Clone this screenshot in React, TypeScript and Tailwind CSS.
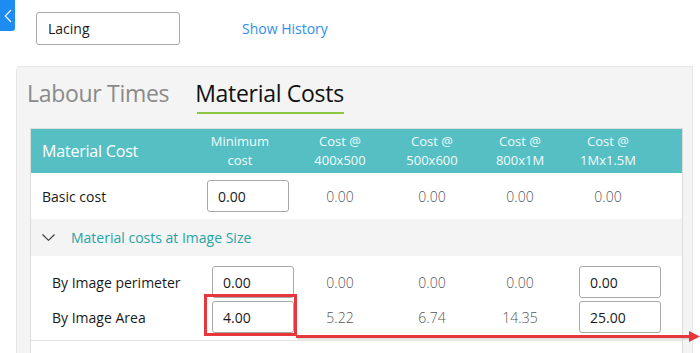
import React from 'react';

const cols = 'grid grid-cols-[157px_104px_96px_88px_88px_88px_31px]';

const ValueInput: React.FC<{ value: string; className?: string }> = ({ value, className = '' }) => (
  <div
    className={`w-[82px] h-[32px] flex items-center pl-[10px] bg-white border border-[#a8a8a8] rounded-[3px] text-[14px] text-[#1a1a1a] ${className}`}
  >
    {value}
  </div>
);

const Value: React.FC<{ v: string }> = ({ v }) => (
  <div className="flex items-center justify-center text-[14px] font-light text-[#555]">{v}</div>
);

const App: React.FC = () => {
  const headers = ['Minimum cost', 'Cost @ 400x500', 'Cost @ 500x600', 'Cost @ 800x1M', 'Cost @ 1Mx1.5M'];

  return (
    <div className="relative w-[700px] h-[353px] overflow-hidden bg-white font-['Open_Sans',sans-serif]">
      {/* top bar */}
      <div className="flex items-start">
        <div className="w-[15px] h-[31px] bg-[#1c8cf2] rounded-br-[3px] flex items-center justify-center">
          <svg width="8" height="14" viewBox="0 0 8 14" fill="none">
            <path d="M7 1 L1.2 7 L7 13" stroke="white" strokeWidth="1.1" />
          </svg>
        </div>
        <div className="ml-[21px] mt-[12px] w-[144px] h-[33px] flex items-center pl-[11px] border border-[#a8a8a8] rounded-[3px] text-[14px] text-[#1a1a1a]">
          Lacing
        </div>
        <div className="ml-[62px] mt-[17px] text-[14px] text-[#2d8ff0] leading-[24px]">Show History</div>
      </div>

      {/* panel */}
      <div className="ml-[16px] mt-[21px] w-[677px] h-[300px] bg-[#f4f4f4] border border-[#e6e6e6] rounded-tl-[4px]">
        <div className="flex pt-[10px] pl-[10px]">
          <div className="text-[23px] leading-[32px] text-[#8a8a8a] tracking-[-0.3px]">Labour Times</div>
          <div className="ml-[26px] flex flex-col">
            <div className="text-[23px] leading-[32px] text-[#111] tracking-[-0.3px]">Material Costs</div>
            <div className="mt-[3px] h-[2px] bg-[#8dc63f] ml-[2px]" />
          </div>
        </div>

        <div className="ml-[13px] mt-[14px] w-[653px] border border-[#dcdcdc] bg-white">
          {/* header */}
          <div className={`${cols} h-[44px] bg-[#56bfc4] text-white`}>
            <div className="flex items-center pl-[11px] text-[16px] tracking-[-0.2px]">Material Cost</div>
            {headers.map((h) => {
              const [a, b] = h.startsWith('Cost') ? ['Cost @', h.slice(7)] : ['Minimum', 'cost'];
              return (
                <div key={h} className="flex flex-col items-center justify-center text-[13px] leading-[19px] text-[#f2fbfb]">
                  <span>{a}</span>
                  <span>{b}</span>
                </div>
              );
            })}
            <div />
          </div>

          {/* basic cost */}
          <div className={`${cols} h-[46px] items-center`}>
            <div className="pl-[11px] text-[14px] text-[#1a1a1a]">Basic cost</div>
            <div className="pl-[19px]">
              <ValueInput value="0.00" />
            </div>
            <Value v="0.00" />
            <Value v="0.00" />
            <Value v="0.00" />
            <Value v="0.00" />
            <div />
          </div>

          {/* accordion */}
          <div className="h-[37px] bg-[#f4f4f4] flex items-center">
            <svg className="ml-[11px]" width="13" height="7" viewBox="0 0 13 7" fill="none">
              <path d="M0.5 0.5 L6.5 6.3 L12.5 0.5" stroke="#333" strokeWidth="1.1" />
            </svg>
            <span className="ml-[16px] text-[14px] text-[#25a4a8]">Material costs at Image Size</span>
          </div>

          <div className="flex flex-col gap-[3px] pt-[10px] pb-[7px] border-b border-[#e2e2e2]">
            <div className={`${cols} h-[32px] items-center`}>
              <div className="pl-[21px] text-[14px] text-[#1a1a1a] whitespace-nowrap">By Image perimeter</div>
              <div className="pl-[24px]">
                <ValueInput value="0.00" />
              </div>
              <Value v="0.00" />
              <Value v="0.00" />
              <Value v="0.00" />
              <div className="pl-[15px]">
                <ValueInput value="0.00" />
              </div>
              <div />
            </div>
            <div className={`${cols} h-[32px] items-center`}>
              <div className="pl-[21px] text-[14px] text-[#1a1a1a] whitespace-nowrap">By Image Area</div>
              <div className="pl-[24px]">
                <ValueInput value="4.00" />
              </div>
              <Value v="5.22" />
              <Value v="6.74" />
              <Value v="14.35" />
              <div className="pl-[15px]">
                <ValueInput value="25.00" />
              </div>
              <div />
            </div>
          </div>
          <div className="h-[30px]" />
        </div>
      </div>

      {/* red annotation */}
      <svg className="absolute left-0 top-0 pointer-events-none" width="700" height="353" viewBox="0 0 700 353">
        <line x1="297" y1="338.5" x2="690" y2="338.5" stroke="#9a9a9a" strokeOpacity="0.35" strokeWidth="2" />
        <rect x="205.5" y="295.5" width="90" height="39" fill="none" stroke="#e8373c" strokeWidth="3" />
        <line x1="296" y1="336.5" x2="691" y2="336.5" stroke="#e8373c" strokeWidth="3" />
        <path d="M689 331 L700 336.5 L689 342 Z" fill="#e8373c" />
      </svg>
    </div>
  );
};

export default App;
